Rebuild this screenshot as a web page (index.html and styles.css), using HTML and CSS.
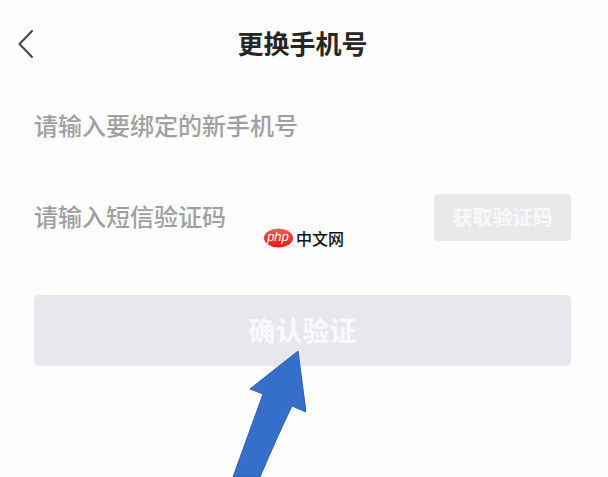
FILE: index.html
```html
<!DOCTYPE html>
<html lang="zh-CN">
<head>
<meta charset="utf-8">
<meta name="viewport" content="width=device-width, initial-scale=1">
<title>更换手机号</title>
<link rel="stylesheet" href="styles.css">
</head>
<body>
<div class="page">
  <header class="header">
    <button class="back" type="button" aria-label="返回">
      <svg width="16" height="30" viewBox="0 0 16 30" aria-hidden="true"><path d="M14 2 1.5 15 14 28"/></svg>
    </button>
    <h1 class="title">更换手机号</h1>
  </header>
  <form class="form">
    <div class="row">
      <input class="field" type="tel" aria-label="新手机号" placeholder="请输入要绑定的新手机号">
    </div>
    <div class="row">
      <input class="field" type="text" aria-label="短信验证码" placeholder="请输入短信验证码">
      <button class="code" type="button">获取验证码</button>
    </div>
    <button class="submit" type="button">确认验证</button>
  </form>
  <div class="watermark">
    <svg class="badge" width="30" height="20" viewBox="0 0 30 20" role="img" aria-label="php">
      <defs>
        <linearGradient id="red" x1="0" y1="0" x2="0" y2="1">
          <stop offset="0" stop-color="#f4605c"/>
          <stop offset="0.5" stop-color="#f03434"/>
          <stop offset="1" stop-color="#e81c20"/>
        </linearGradient>
      </defs>
      <ellipse cx="14.5" cy="10" rx="14.5" ry="9.5" fill="url(#red)"/>
      <text class="badge-text" x="14" y="13" text-anchor="middle">php</text>
    </svg>
    <span>中文网</span>
  </div>
  <svg class="arrow" width="74" height="126" viewBox="0 0 74 126" aria-hidden="true">
    <path d="M66 0 74 61 60 55Q45 86 28 126H1L31 43 18 38Z"/>
  </svg>
</div>
</body>
</html>
```
FILE: styles.css
```css
* {
  box-sizing: border-box;
}

body {
  margin: 0;
  background: #fdfdfd;
  font-family: "Noto Sans CJK SC", sans-serif;
}

button,
input {
  margin: 0;
  padding: 0;
  border: 0;
  font: inherit;
}

.page {
  position: relative;
  min-height: 100vh;
  padding: 0 37px 0 34px;
  overflow: hidden;
}

.header {
  display: flex;
  align-items: center;
  justify-content: center;
  height: 88px;
}

.back {
  position: absolute;
  left: 18px;
  display: flex;
  background: none;
}

.back path {
  fill: none;
  stroke: #444;
  stroke-width: 2;
  stroke-linecap: round;
  stroke-linejoin: round;
}

.title {
  margin: 0;
  padding-bottom: 2px;
  color: #262626;
  font-size: 26px;
  font-weight: 700;
  line-height: 32px;
}

.form {
  display: flex;
  flex-direction: column;
  gap: 44px;
  padding-top: 15px;
}

.row {
  display: flex;
  align-items: center;
  height: 47px;
}

.field {
  flex: 1;
  min-width: 0;
  height: 100%;
  padding-bottom: 4px;
  background: none;
  color: #333;
  font-size: 24px;
  font-weight: 500;
}

.field::placeholder {
  color: #a0a0a0;
  opacity: 1;
}

.code {
  width: 137px;
  height: 100%;
  padding-bottom: 2px;
  border-radius: 4px;
  background: #e9e9ea;
  color: #f8f8fa;
  font-size: 20px;
  font-weight: 700;
}

.submit {
  height: 71px;
  margin-top: 10px;
  padding-bottom: 2px;
  border-radius: 5px;
  background: #e8e7ee;
  color: #f9f9fb;
  font-size: 27px;
  font-weight: 700;
}

.watermark {
  position: absolute;
  top: 238px;
  left: 50%;
  display: flex;
  align-items: center;
  gap: 2px;
  color: #111;
  font-size: 16px;
  font-weight: 500;
  line-height: 20px;
  white-space: nowrap;
  transform: translate(-50%, -50%);
}

.badge-text {
  fill: #fff;
  font-family: "Liberation Sans", sans-serif;
  font-size: 13px;
  font-style: italic;
}

.arrow {
  position: absolute;
  top: 351px;
  left: calc(50% - 72px);
  fill: #356fc9;
  stroke: #2c62b4;
  stroke-width: 1;
}
```
